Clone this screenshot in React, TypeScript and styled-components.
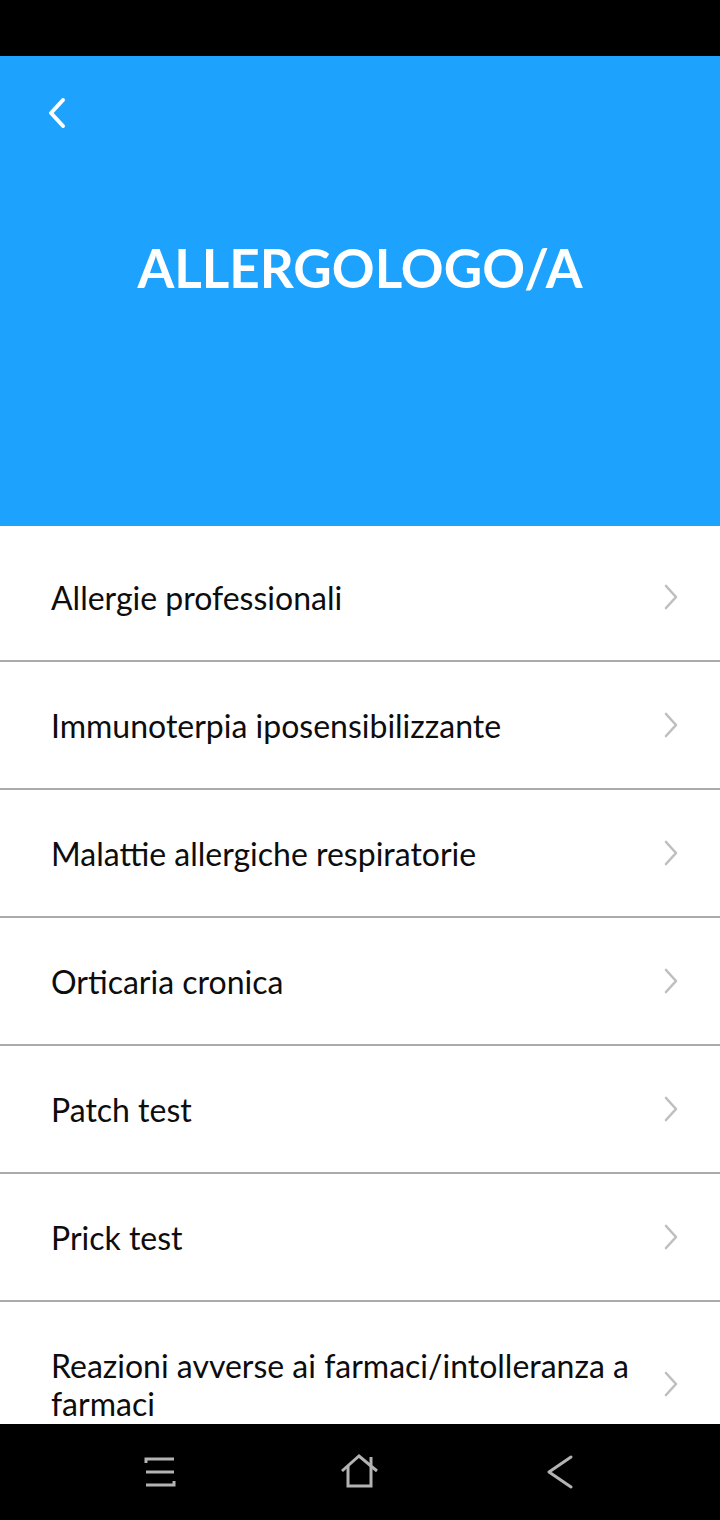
import React from 'react';
import styled, { createGlobalStyle } from 'styled-components';

const GlobalStyle = createGlobalStyle`
  html, body {
    margin: 0;
    padding: 0;
    background: #000;
  }
  body {
    font-family: Lato, 'Noto Sans', sans-serif;
  }
`;

const Screen = styled.div`
  width: 720px;
  height: 1520px;
  display: flex;
  flex-direction: column;
  background: #fff;
  overflow: hidden;
`;

const StatusBar = styled.div`
  height: 56px;
  flex-shrink: 0;
  background: #000;
`;

const Header = styled.header`
  height: 470px;
  flex-shrink: 0;
  background: #1da3fd;
  display: flex;
  flex-direction: column;
  box-sizing: border-box;
  padding: 38px 0 0;
`;

const BackButton = styled.button`
  width: 56px;
  height: 38px;
  margin-left: 30px;
  padding: 0;
  border: 0;
  background: none;
  display: flex;
  align-items: center;
  justify-content: center;
  cursor: pointer;
`;

const Title = styled.h1`
  margin: 104px 0 0;
  text-align: center;
  color: #fff;
  font-family: Lato, sans-serif;
  font-weight: 700;
  font-size: 53px;
  line-height: 64px;
  letter-spacing: 0;
`;

const List = styled.ul`
  flex: 1;
  margin: 0;
  padding: 8px 0 0;
  list-style: none;
  overflow: hidden;
`;

const Row = styled.li`
  display: flex;
  align-items: center;
  padding: 45px 40px 43px 51px;
  border-bottom: 2px solid #ababab;
  cursor: pointer;
`;

const Label = styled.span`
  flex: 1;
  font-family: Lato, sans-serif;
  font-size: 32px;
  line-height: 38px;
  color: #0d0d0d;
  padding-right: 20px;
`;

const NavBar = styled.nav`
  height: 96px;
  flex-shrink: 0;
  background: #000;
  display: flex;
  align-items: center;
  justify-content: space-around;
  padding: 0 60px;
`;

const NavIcon = styled.div`
  width: 40px;
  height: 40px;
  display: flex;
  align-items: center;
  justify-content: center;
`;

const items = [
  'Allergie professionali',
  'Immunoterpia iposensibilizzante',
  'Malattie allergiche respiratorie',
  'Orticaria cronica',
  'Patch test',
  'Prick test',
  'Reazioni avverse ai farmaci/intolleranza a farmaci',
];

const Chevron = () => (
  <svg width="18" height="26" viewBox="0 0 18 26" style={{ marginTop: -2 }}>
    <path d="M4 2 L14 13 L4 24" fill="none" stroke="#bfbfbf" strokeWidth="2.6" strokeLinecap="round" strokeLinejoin="round" />
  </svg>
);

export default function App() {
  return (
    <Screen>
      <GlobalStyle />
      <StatusBar />
      <Header>
        <BackButton aria-label="Indietro">
          <svg width="22" height="32" viewBox="0 0 22 32">
            <path d="M16 3 L4 16 L16 29" fill="none" stroke="#fff" strokeWidth="4" strokeLinecap="round" strokeLinejoin="round" />
          </svg>
        </BackButton>
        <Title>ALLERGOLOGO/A</Title>
      </Header>
      <List>
        {items.map((t) => (
          <Row key={t}>
            <Label>{t}</Label>
            <Chevron />
          </Row>
        ))}
      </List>
      <NavBar>
        <NavIcon>
          <svg width="34" height="34" viewBox="0 0 34 34">
            <g fill="none" stroke="#b3b3b3" strokeWidth="3" strokeLinecap="butt">
              <path d="M3 8 V4 H31" />
              <path d="M3 17 H31" />
              <path d="M3 30 H31 V26" />
            </g>
          </svg>
        </NavIcon>
        <NavIcon>
          <svg width="40" height="36" viewBox="0 0 40 36">
            <g fill="none" stroke="#b3b3b3" strokeWidth="3" strokeLinejoin="miter">
              <path d="M2 17 L19 2 L37 17" />
              <path d="M31 3 V11" />
              <path d="M8 12 V32 H31 V12" />
            </g>
          </svg>
        </NavIcon>
        <NavIcon>
          <svg width="30" height="34" viewBox="0 0 30 34">
            <path d="M26 2 L4 17 L26 32" fill="none" stroke="#b3b3b3" strokeWidth="3" strokeLinecap="round" strokeLinejoin="round" />
          </svg>
        </NavIcon>
      </NavBar>
    </Screen>
  );
}
